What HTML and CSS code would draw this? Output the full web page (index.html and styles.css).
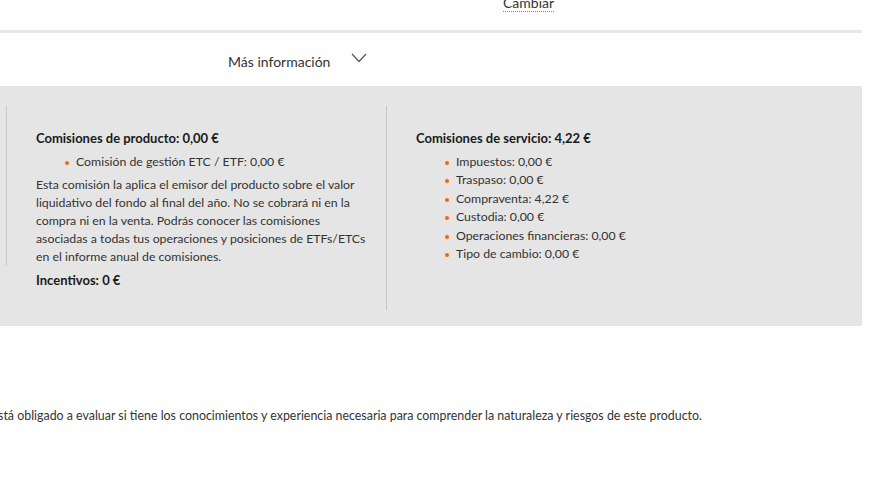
FILE: index.html
```html
<!DOCTYPE html>
<html>
<head>
    <title>Comisiones</title>
    <link rel="stylesheet" href="styles.css">
</head>
<body>
    <div class="page">
        <div class="top-row">
            <a class="change-link">Cambiar</a>
        </div>
        <div class="separator"></div>

        <div class="more-info">
            <span>Más información</span>
            <svg class="chevron" viewBox="0 0 16 10" width="16" height="10" fill="none" stroke="currentColor" stroke-width="1.2">
                <polyline points="1,1 8,8.5 15,1"></polyline>
            </svg>
        </div>

        <div class="fees-panel">
            <div class="fees-col fees-left">
                <div class="fees-inner">
                    <h3>Comisiones de producto: 0,00 €</h3>
                    <ul>
                        <li>Comisión de gestión ETC / ETF: 0,00 €</li>
                    </ul>
                    <p>Esta comisión la aplica el emisor del producto sobre el valor liquidativo del fondo al final del año. No se cobrará ni en la compra ni en la venta. Podrás conocer las comisiones asociadas a todas tus operaciones y posiciones de ETFs/ETCs en el informe anual de comisiones.</p>
                    <h3>Incentivos: 0 €</h3>
                </div>
            </div>
            <div class="fees-col fees-right">
                <div class="fees-inner">
                    <h3>Comisiones de servicio: 4,22 €</h3>
                    <ul>
                        <li>Impuestos: 0,00 €</li>
                        <li>Traspaso: 0,00 €</li>
                        <li>Compraventa: 4,22 €</li>
                        <li>Custodia: 0,00 €</li>
                        <li>Operaciones financieras: 0,00 €</li>
                        <li>Tipo de cambio: 0,00 €</li>
                    </ul>
                </div>
            </div>
        </div>

        <p class="disclaimer">Está obligado a evaluar si tiene los conocimientos y experiencia necesaria para comprender la naturaleza y riesgos de este producto.</p>
    </div>
</body>
</html>
```

FILE: styles.css
```css
* {
    margin: 0;
    padding: 0;
    box-sizing: border-box;
}

body {
    font-family: Lato, 'Open Sans', Arial, sans-serif;
    background-color: #FFFFFF;
    color: #333333;
    overflow: hidden;
}

.page {
    width: 862px;
}

.top-row {
    height: 30px;
    display: flex;
    align-items: flex-start;
    padding-left: 503px;
}

.change-link {
    font-size: 14px;
    line-height: 14px;
    margin-top: -4px;
    color: #333333;
    padding-bottom: 1px;
    border-bottom: 1px dotted #FF6200;
}

.separator {
    height: 3px;
    background-color: #E8E8E8;
}

.more-info {
    height: 53px;
    display: flex;
    align-items: center;
    gap: 21px;
    font-size: 14px;
    color: #333333;
    padding: 4px 0 0 228px;
}

.chevron {
    color: #555555;
    margin-top: -7px;
}

.fees-panel {
    background-color: #E5E5E5;
    display: flex;
    padding: 20px 0 16px 6px;
    height: 240px;
}

.fees-col {
    width: 380px;
    border-left: 1px solid #C8C8C8;
}

.fees-left {
    height: 160px;
}

.fees-right {
    height: 204px;
}

.fees-inner {
    padding: 23px 0 0 29px;
    font-size: 12.3px;
    line-height: 18px;
}

.fees-inner h3 {
    font-size: 13px;
    font-weight: 700;
    color: #1A1A1A;
    line-height: 18px;
    margin-bottom: 6px;
}

.fees-inner ul {
    list-style: none;
    padding-left: 40px;
    margin-bottom: 5px;
}

.fees-inner li {
    position: relative;
    line-height: 18.4px;
}

.fees-inner li::before {
    content: "";
    position: absolute;
    left: -11px;
    top: 8px;
    width: 4px;
    height: 4px;
    border-radius: 50%;
    background-color: #FF6200;
}

.fees-inner p {
    margin-bottom: 5px;
    width: 330px;
}

.disclaimer {
    margin-top: 82px;
    margin-left: -9px;
    font-size: 12.4px;
    color: #333333;
    white-space: nowrap;
}
```
